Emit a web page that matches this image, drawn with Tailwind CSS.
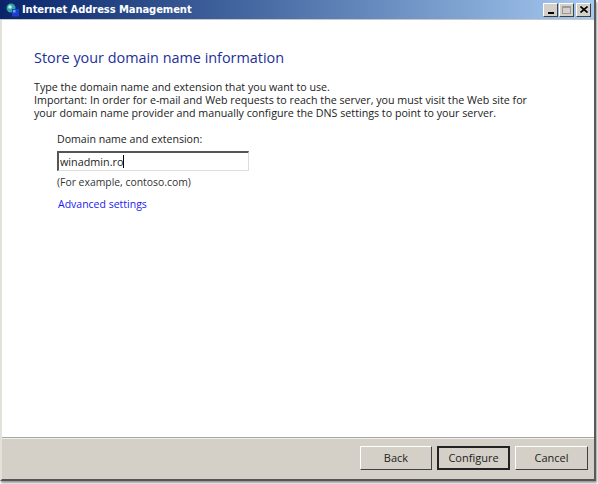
<!DOCTYPE html>
<html><head><meta charset="utf-8"><script src="https://cdn.jsdelivr.net/npm/@tailwindcss/browser@4"></script></head>
<body class="bg-white">
<div class="w-[598px] h-[484px] overflow-hidden font-['Open_Sans',sans-serif]">
<div class="w-[596px] h-[481px] flex flex-col bg-[#d4d0c8] border-l-2 border-l-[#e4e1da] border-r-2 border-r-[#5a5a5a] border-b-2 border-b-[#555] shadow-[1px_2px_2px_#999]">
  <div class="h-[20px] shrink-0 flex items-center justify-between bg-gradient-to-r from-[#0a246a] to-[#a6caf0] border-b border-b-[#c8c8c8] -ml-[2px] pl-[6px] pr-[3px]">
    <div class="flex items-center gap-[2px]">
      <svg width="14" height="14" viewBox="0 0 14 14"><circle cx="5" cy="5" r="4.5" fill="#2fa8a0"/><circle cx="4" cy="4" r="1.8" fill="#c8f0e8"/><rect x="6" y="6" width="7" height="7.5" fill="#1c3fd0"/><rect x="7" y="7" width="2.5" height="2.5" fill="#7f9cf0"/></svg>
      <span class="text-[10px] tracking-[-0.1px] leading-none font-bold text-white font-['DejaVu_Sans',sans-serif]">Internet Address Management</span>
    </div>
    <div class="flex items-center gap-[2px]">
      <div class="w-[15px] h-[14px] bg-[#d4d0c8] border border-t-white border-l-white border-r-[#404040] border-b-[#404040] flex items-end justify-center pb-[2px]"><div class="w-[6px] h-[2px] bg-black"></div></div>
      <div class="w-[15px] h-[14px] -ml-[1px] bg-[#d4d0c8] border border-t-white border-l-white border-r-[#404040] border-b-[#404040] flex items-center justify-center"><div class="w-[9px] h-[8px] border border-[#9a9a9a] border-t-2"></div></div>
      <div class="w-[15px] h-[14px] bg-[#d4d0c8] border border-t-white border-l-white border-r-[#404040] border-b-[#404040] flex items-center justify-center"><svg width="8" height="7" viewBox="0 0 8 7"><path d="M0.5 0.5L7.5 6.5M7.5 0.5L0.5 6.5" stroke="#000" stroke-width="1.6"/></svg></div>
    </div>
  </div>
  <div class="flex-1 bg-white pl-[32px] border-b border-b-[#a8a8a8] flex flex-col">
    <h1 class="mt-[28px] text-[14.4px] leading-[20px] font-normal text-[#1c2f9a]">Store your domain name information</h1>
    <p class="mt-[13px] text-[10.7px] leading-[13px] text-[#222] whitespace-nowrap">Type the domain name and extension that you want to use.<br>Important: In order for e-mail and Web requests to reach the server, you must visit the Web site for<br>your domain name provider and manually configure the DNS settings to point to your server.</p>
    <div class="ml-[23px] flex flex-col">
      <label class="mt-[13px] text-[10.6px] leading-[13px] text-[#222]">Domain name and extension:</label>
      <div class="mt-[5px] w-[192px] h-[20px] bg-white border border-t-2 border-l-2 border-t-[#555] border-l-[#555] border-r-[#ddd] border-b-[#ddd] flex items-center pl-[1px] text-[10.8px] text-[#222]"><span class="border-r border-r-black leading-[13px]">winadmin.ro</span></div>
      <div class="mt-[5px] text-[10.4px] leading-[13px] text-[#333]">(For example, contoso.com)</div>
      <a class="mt-[9px] ml-[1px] text-[10.5px] leading-[13px] text-[#1a1aee]">Advanced settings</a>
    </div>
  </div>
  <div class="h-[41px] shrink-0 border-t border-t-[#f0eee8] flex items-start justify-end gap-[5px] pt-[7px] pr-[6px]">
    <button class="w-[72px] h-[24px] bg-[#d4d0c8] border border-t-white border-l-white border-r-[#404040] border-b-[#404040] text-[11px] text-[#222]">Back</button>
    <button class="w-[73px] h-[24px] bg-[#d4d0c8] border-2 border-[#222] text-[11px] text-[#222]">Configure</button>
    <button class="w-[73px] h-[24px] bg-[#d4d0c8] border border-t-white border-l-white border-r-[#404040] border-b-[#404040] text-[11px] text-[#222]">Cancel</button>
  </div>
</div>
</div>
</body></html>
